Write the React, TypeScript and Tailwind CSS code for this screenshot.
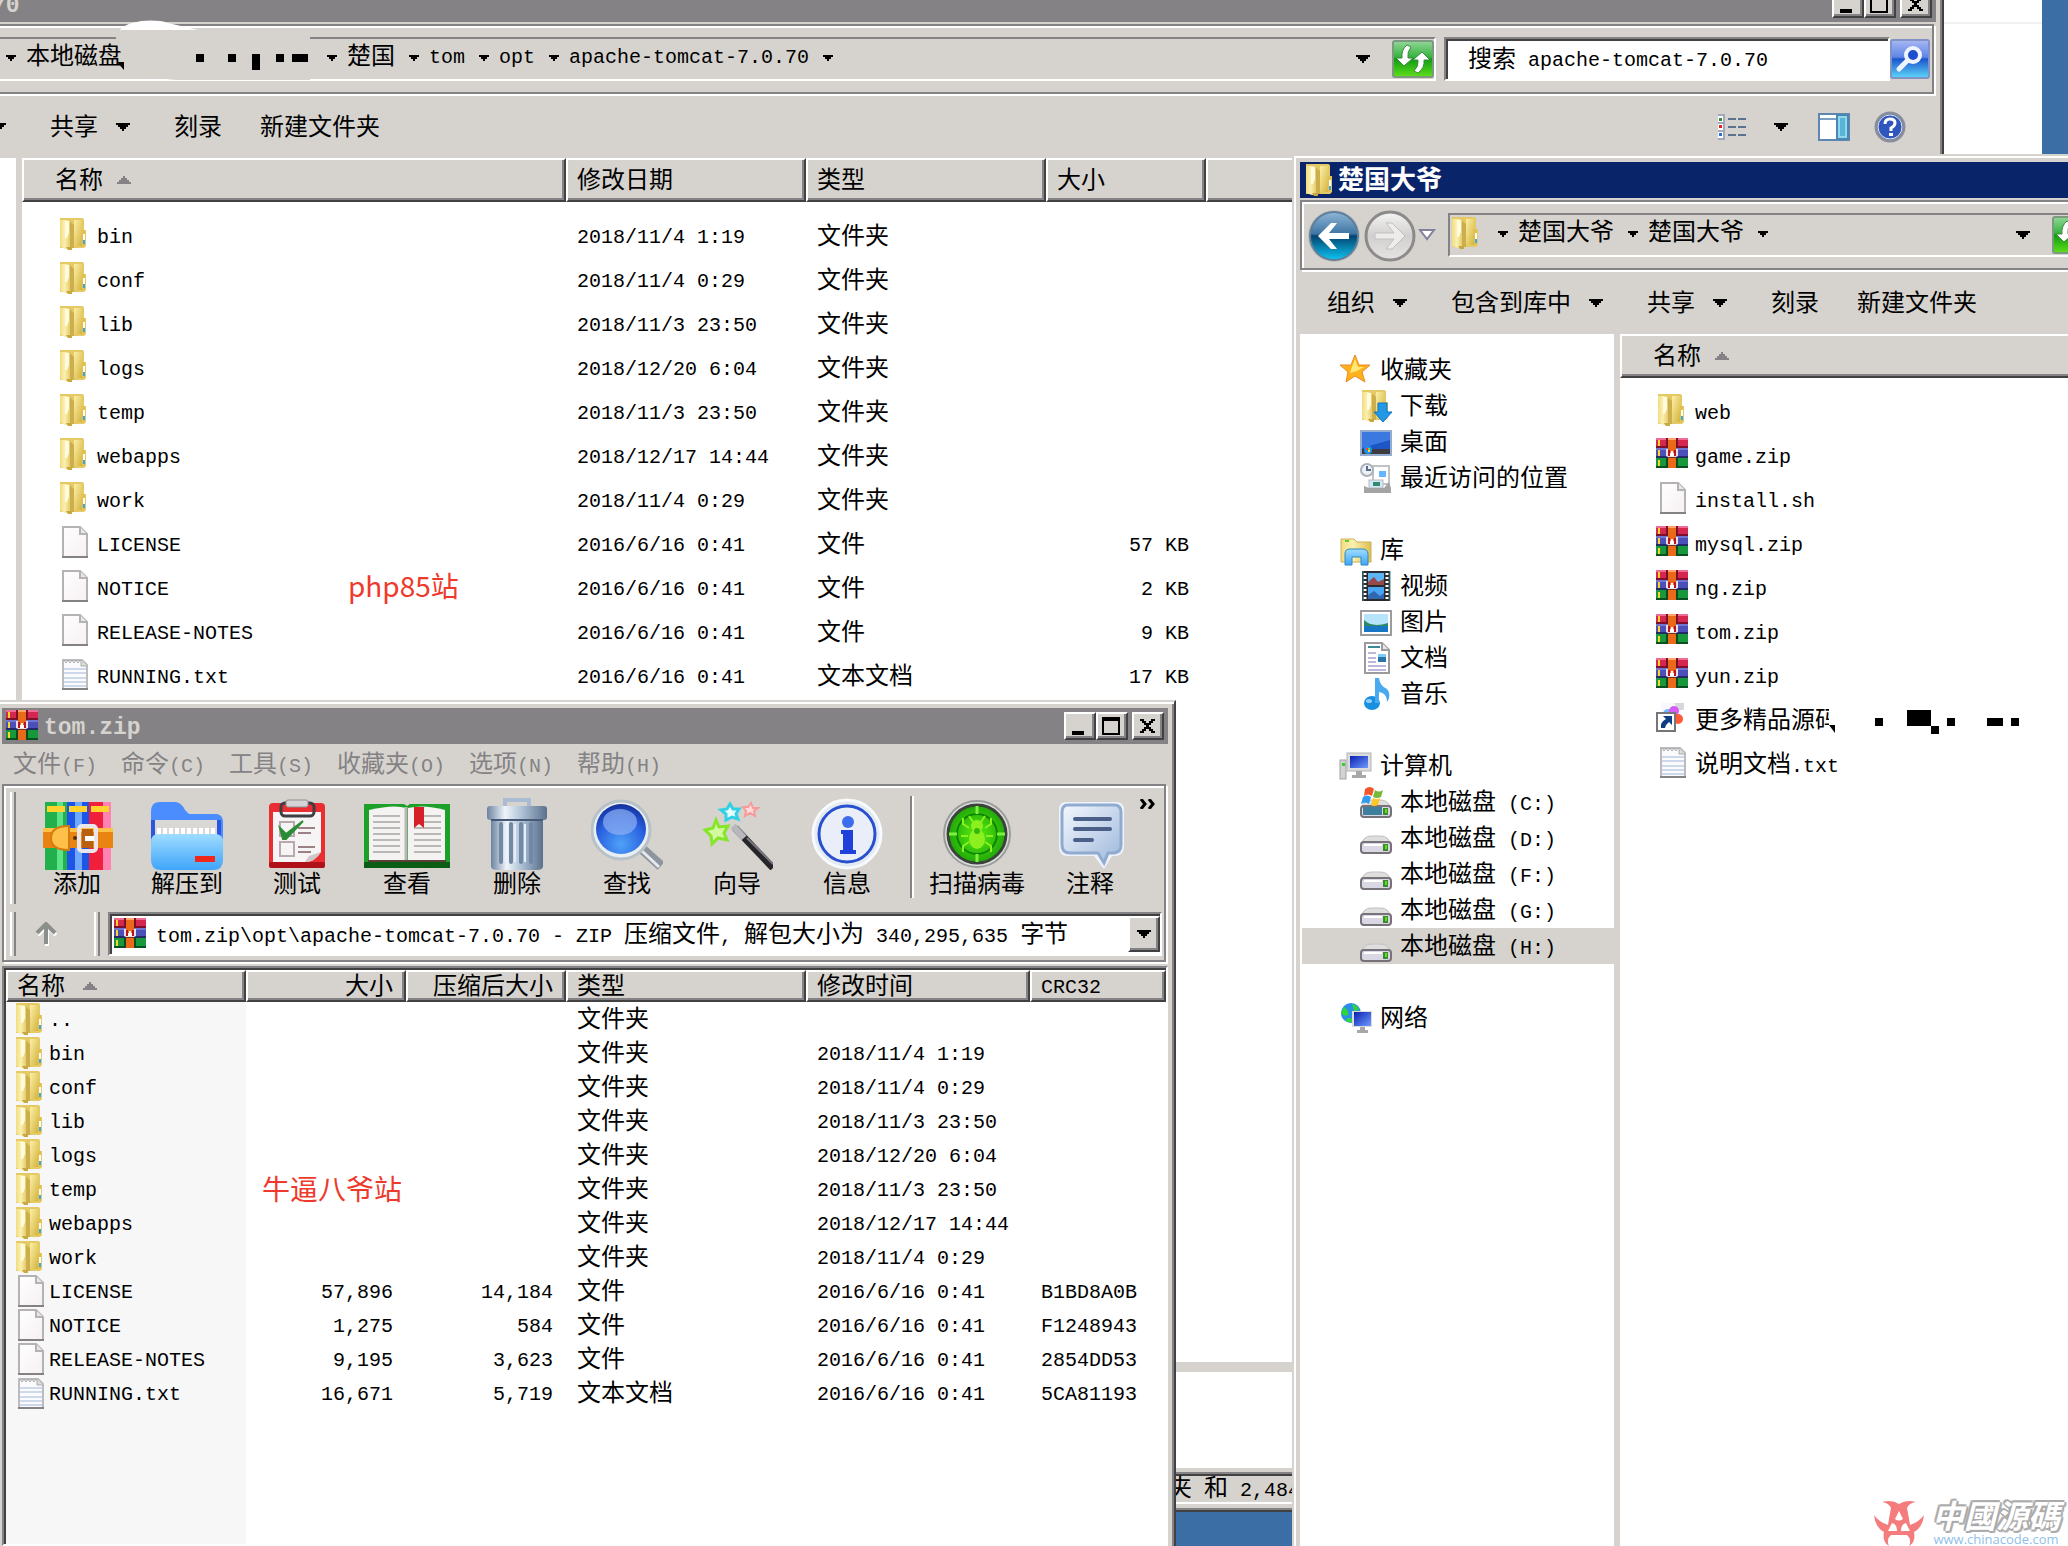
import type { ReactNode } from 'react';

type IconName =
  | 'folder'
  | 'zip'
  | 'file'
  | 'text'
  | 'shortcut'
  | 'star'
  | 'downloads'
  | 'desktop'
  | 'recent'
  | 'library'
  | 'video'
  | 'picture'
  | 'document'
  | 'music'
  | 'computer'
  | 'systemDrive'
  | 'drive'
  | 'network';

type FileRow = {
  name: string;
  icon: IconName;
  date?: string;
  type?: string;
  size?: string;
};

type ArchiveRow = {
  name: string;
  icon: IconName;
  size?: string;
  packed?: string;
  type: string;
  date?: string;
  crc?: string;
};

const tomcatFiles: FileRow[] = [
  { name: 'bin', icon: 'folder', date: '2018/11/4 1:19', type: '文件夹' },
  { name: 'conf', icon: 'folder', date: '2018/11/4 0:29', type: '文件夹' },
  { name: 'lib', icon: 'folder', date: '2018/11/3 23:50', type: '文件夹' },
  { name: 'logs', icon: 'folder', date: '2018/12/20 6:04', type: '文件夹' },
  { name: 'temp', icon: 'folder', date: '2018/11/3 23:50', type: '文件夹' },
  { name: 'webapps', icon: 'folder', date: '2018/12/17 14:44', type: '文件夹' },
  { name: 'work', icon: 'folder', date: '2018/11/4 0:29', type: '文件夹' },
  { name: 'LICENSE', icon: 'file', date: '2016/6/16 0:41', type: '文件', size: '57 KB' },
  { name: 'NOTICE', icon: 'file', date: '2016/6/16 0:41', type: '文件', size: '2 KB' },
  { name: 'RELEASE-NOTES', icon: 'file', date: '2016/6/16 0:41', type: '文件', size: '9 KB' },
  { name: 'RUNNING.txt', icon: 'text', date: '2016/6/16 0:41', type: '文本文档', size: '17 KB' }
];

const archiveFiles: ArchiveRow[] = [
  { name: '..', icon: 'folder', type: '文件夹' },
  { name: 'bin', icon: 'folder', type: '文件夹', date: '2018/11/4 1:19' },
  { name: 'conf', icon: 'folder', type: '文件夹', date: '2018/11/4 0:29' },
  { name: 'lib', icon: 'folder', type: '文件夹', date: '2018/11/3 23:50' },
  { name: 'logs', icon: 'folder', type: '文件夹', date: '2018/12/20 6:04' },
  { name: 'temp', icon: 'folder', type: '文件夹', date: '2018/11/3 23:50' },
  { name: 'webapps', icon: 'folder', type: '文件夹', date: '2018/12/17 14:44' },
  { name: 'work', icon: 'folder', type: '文件夹', date: '2018/11/4 0:29' },
  { name: 'LICENSE', icon: 'file', size: '57,896', packed: '14,184', type: '文件', date: '2016/6/16 0:41', crc: 'B1BD8A0B' },
  { name: 'NOTICE', icon: 'file', size: '1,275', packed: '584', type: '文件', date: '2016/6/16 0:41', crc: 'F1248943' },
  { name: 'RELEASE-NOTES', icon: 'file', size: '9,195', packed: '3,623', type: '文件', date: '2016/6/16 0:41', crc: '2854DD53' },
  { name: 'RUNNING.txt', icon: 'text', size: '16,671', packed: '5,719', type: '文本文档', date: '2016/6/16 0:41', crc: '5CA81193' }
];

const siteFiles: FileRow[] = [
  { name: 'web', icon: 'folder' },
  { name: 'game.zip', icon: 'zip' },
  { name: 'install.sh', icon: 'file' },
  { name: 'mysql.zip', icon: 'zip' },
  { name: 'ng.zip', icon: 'zip' },
  { name: 'tom.zip', icon: 'zip' },
  { name: 'yun.zip', icon: 'zip' },
  { name: '更多精品源码', icon: 'shortcut' },
  { name: '说明文档.txt', icon: 'text' }
];

const places: { title: string; icon: IconName; items: { label: string; icon: IconName; active?: boolean }[] }[] = [
  {
    title: '收藏夹',
    icon: 'star',
    items: [
      { label: '下载', icon: 'downloads' },
      { label: '桌面', icon: 'desktop' },
      { label: '最近访问的位置', icon: 'recent' }
    ]
  },
  {
    title: '库',
    icon: 'library',
    items: [
      { label: '视频', icon: 'video' },
      { label: '图片', icon: 'picture' },
      { label: '文档', icon: 'document' },
      { label: '音乐', icon: 'music' }
    ]
  },
  {
    title: '计算机',
    icon: 'computer',
    items: [
      { label: '本地磁盘 (C:)', icon: 'systemDrive' },
      { label: '本地磁盘 (D:)', icon: 'drive' },
      { label: '本地磁盘 (F:)', icon: 'drive' },
      { label: '本地磁盘 (G:)', icon: 'drive' },
      { label: '本地磁盘 (H:)', icon: 'drive', active: true }
    ]
  },
  { title: '网络', icon: 'network', items: [] }
];

const archiveMenu = ['文件(F)', '命令(C)', '工具(S)', '收藏夹(O)', '选项(N)', '帮助(H)'];
const archivePath = 'tom.zip\\opt\\apache-tomcat-7.0.70 - ZIP 压缩文件, 解包大小为 340,295,635 字节';

// Latin is half the width of a Chinese glyph, so the two scripts get their own sizes.
function T({ children = '' }: { children?: string }) {
  return (
    <span className="inline-block pt-1 whitespace-pre">
      {children.split(/([\u4e00-\u9fff]+)/).map((part, i) =>
        i % 2 ? (
          <span key={i} className="text-[24px]">
            {part}
          </span>
        ) : (
          part
        )
      )}
    </span>
  );
}

function Gradients() {
  return (
    <svg className="absolute h-0 w-0" aria-hidden>
      <defs>
        <linearGradient id="gold" x1="0" x2="1">
          <stop offset="0" stopColor="#f1dc80" />
          <stop offset=".4" stopColor="#fbf0b0" />
          <stop offset="1" stopColor="#dcbf52" />
        </linearGradient>
        <linearGradient id="goldDark" x1="0" x2="1" y1="0" y2="1">
          <stop offset="0" stopColor="#fbf0a8" />
          <stop offset="1" stopColor="#d6b43c" />
        </linearGradient>
        <linearGradient id="page" x1="0" x2="1" y1="0" y2="1">
          <stop offset="0" stopColor="#fff" />
          <stop offset="1" stopColor="#f6f0f2" />
        </linearGradient>
        <linearGradient id="green" x1="0" x2="0" y1="0" y2="1">
          <stop offset="0" stopColor="#93d79b" />
          <stop offset=".45" stopColor="#35b33c" />
          <stop offset=".5" stopColor="#109a12" />
          <stop offset="1" stopColor="#5fe01c" />
        </linearGradient>
        <linearGradient id="blue" x1="0" x2="0" y1="0" y2="1">
          <stop offset="0" stopColor="#a9b8f5" />
          <stop offset=".45" stopColor="#5f86e4" />
          <stop offset=".5" stopColor="#1c55cc" />
          <stop offset="1" stopColor="#5ed8fb" />
        </linearGradient>
        <linearGradient id="orb" x1="0" x2="0" y1="0" y2="1">
          <stop offset="0" stopColor="#8fb6d6" />
          <stop offset=".45" stopColor="#3f76a4" />
          <stop offset=".5" stopColor="#04446f" />
          <stop offset="1" stopColor="#0cc5f4" />
        </linearGradient>
        <linearGradient id="orbOff" x1="0" x2="0" y1="0" y2="1">
          <stop offset="0" stopColor="#f5f5f5" />
          <stop offset=".5" stopColor="#d2d0ce" />
          <stop offset="1" stopColor="#e6e4e2" />
        </linearGradient>
        <linearGradient id="sky" x1="0" x2="0" y1="0" y2="1">
          <stop offset="0" stopColor="#9fdcff" />
          <stop offset="1" stopColor="#3fa5fb" />
        </linearGradient>
        <linearGradient id="deep" x1="0" x2="1" y1="0" y2="1">
          <stop offset="0" stopColor="#0a1fb0" />
          <stop offset="1" stopColor="#6f9bff" />
        </linearGradient>
        <linearGradient id="steel" x1="0" x2="1">
          <stop offset="0" stopColor="#6c83a0" />
          <stop offset=".3" stopColor="#eef4fa" />
          <stop offset=".6" stopColor="#a9bed3" />
          <stop offset="1" stopColor="#5b708b" />
        </linearGradient>
        <linearGradient id="glass" x1="0" x2="1" y1="0" y2="1">
          <stop offset="0" stopColor="#f4f8ff" />
          <stop offset="1" stopColor="#9db7da" />
        </linearGradient>
        <radialGradient id="lens" cx=".5" cy=".8" r=".8">
          <stop offset="0" stopColor="#4fa2f8" />
          <stop offset=".6" stopColor="#2a62e0" />
          <stop offset="1" stopColor="#12309c" />
        </radialGradient>
        <radialGradient id="leaf" cx=".5" cy=".5" r=".6">
          <stop offset="0" stopColor="#58ee12" />
          <stop offset="1" stopColor="#159a06" />
        </radialGradient>
      </defs>
    </svg>
  );
}

const DRIVE = (
  <>
    <path d="M5 16Q7 14 12 14H20Q25 14 27 16L31 21H1Z" fill="#dedede" stroke="#c4c0c2" />
    <rect x="1" y="20" width="30" height="11" rx="3" fill="#dad8e4" stroke="#77727a" strokeWidth="2" />
    <rect x="4" y="22" width="18" height="2" fill="#fff" />
    <rect x="23" y="22" width="5" height="7" fill="#3c8a2c" />
    <rect x="25" y="23" width="2" height="4" fill="#5be020" />
  </>
);

const PAGE = (
  <>
    <path d="M5 1H22L29 8V31H5Z" fill="url(#page)" stroke="#b4b2b4" strokeWidth="2" />
    <path d="M22 1V8H29" fill="#e8e6e8" stroke="#b4b2b4" strokeWidth="2" />
    <path d="M4 31H30" stroke="#848284" strokeWidth="2" />
  </>
);

const FOLDER = (
  <>
    <path d="M2 0H24Q26 0 26 2V12H28V28L26 30H2Z" fill="#e4c964" />
    <path d="M16 2H24V28H16Z" fill="url(#goldDark)" />
    <path d="M24 12H27V28H24Z" fill="#e0c050" />
    <path d="M2 2H10L14 4V31H8L2 29Z" fill="url(#gold)" />
    <path d="M7 3H11V15L9 20H7Z" fill="#fffbe0" />
    <path d="M12 4L16 7V30H12Z" fill="#cdae4c" />
    <path d="M8 29H14V32H10Z" fill="#c9a93f" />
    <rect x="25" y="16" width="2" height="6" fill="#fff" />
    <rect x="25" y="22" width="2" height="4" fill="#3aa5e8" />
  </>
);

const MONITOR = (
  <>
    <rect x="7" y="3" width="24" height="18" fill="#dcdcdc" stroke="#b4b4b4" />
    <rect x="10" y="6" width="18" height="12" fill="url(#deep)" />
    <path d="M16 21H22V25H26V28H12V25H16Z" fill="#a8a8a8" />
  </>
);

const iconArt: Record<IconName, ReactNode> = {
  folder: FOLDER,
  file: PAGE,
  zip: (
    <>
      <rect width="32" height="10" fill="#d4264f" />
      <rect width="32" height="2" fill="#ee6b92" />
      <rect y="8" width="32" height="2" fill="#7c0f2b" />
      <rect y="10" width="32" height="10" fill="#4b50b8" />
      <rect y="10" width="32" height="2" fill="#7275cf" />
      <rect y="18" width="32" height="2" fill="#232a68" />
      <rect y="20" width="32" height="10" fill="#17993b" />
      <rect y="28" width="32" height="2" fill="#08501f" />
      <path d="M3 2V8M3 12V18M3 22V28" stroke="#ffd42a" strokeWidth="2" />
      <rect x="10" width="2" height="10" fill="#7a1026" />
      <rect x="20" width="2" height="10" fill="#7a1026" />
      <rect x="10" y="20" width="2" height="10" fill="#0a4a1e" />
      <rect x="20" y="20" width="2" height="10" fill="#0a4a1e" />
      <rect x="12" width="8" height="30" fill="#ea6a1a" />
      <rect x="12" width="8" height="2" fill="#ffa56a" />
      <rect x="12" y="18" width="8" height="2" fill="#7a3410" />
      <path d="M10 11H12V17L14 18H18L20 17V11H22V18L20 19H12L10 18Z" fill="#e6e2e8" />
      <path d="M13 18V12M19 18V12" stroke="#c01020" strokeWidth="2" />
      <path d="M14 18V15H15V13H17V15H18V18Z" fill="#fff" />
    </>
  ),
  text: (
    <>
      <path d="M5 2H24L29 7V31H5Z" fill="#fbfbfd" stroke="#bdbbbd" strokeWidth="2" />
      <path d="M6 2L8 5L10 2L12 5L14 2L16 5L18 2L20 5L22 2" fill="none" stroke="#a9a7a9" />
      <path d="M6 11H28M6 15H28M6 20H28M6 24H28M6 28H28" stroke="#cdd9ea" strokeWidth="2" />
      <path d="M23 2V8H29" fill="#dedcde" stroke="#aaa" />
      <path d="M4 31H30" stroke="#848284" strokeWidth="2" />
    </>
  ),
  shortcut: (
    <>
      <path d="M5 1H19L26 8V20H5Z" fill="#f7f7fc" />
      <path d="M18 1H28V8H22Z" fill="#d8d8dc" />
      <circle cx="12" cy="12" r="5" fill="#6cb8ff" />
      <circle cx="18" cy="9" r="5" fill="#d65cf5" />
      <circle cx="22" cy="17" r="5" fill="#ff5a36" />
      <rect x="1" y="11" width="18" height="18" fill="#fff" stroke="#77757a" strokeWidth="2" />
      <path d="M7 14H16V23L13 20Q10 22 9 26H5Q4 20 10 17Z" fill="#0e3f86" />
    </>
  ),
  star: (
    <>
      <path d="M15 1L19 11H30L22 18L25 28L15 22L6 28L8 18L0 11H11Z" fill="#ffb21c" stroke="#e58a25" strokeWidth="1" />
      <path d="M15 5L18 13H24L17 17L10 19L12 13Z" fill="#ffe873" />
    </>
  ),
  downloads: (
    <>
      {FOLDER}
      <path d="M18 13H27V22H32L23 32L14 22H18Z" fill="#2298e8" stroke="#1574be" />
    </>
  ),
  desktop: (
    <>
      <rect x="1" y="5" width="30" height="24" fill="#1c56c4" stroke="#94acd0" strokeWidth="2" />
      <path d="M2 6H30V14L2 22Z" fill="#3b78e0" />
      <rect x="2" y="23" width="28" height="5" fill="#3c3c40" />
      <circle cx="8" cy="24" r="4" fill="#1e90f0" />
      <path d="M6 22H8V24H6Z" fill="#f33" />
      <path d="M8 22H10V24H8Z" fill="#6d3" />
      <path d="M8 24H10V26H8Z" fill="#fd3" />
    </>
  ),
  recent: (
    <>
      <rect x="13" y="4" width="16" height="18" fill="#fff" stroke="#c2c2c2" strokeWidth="2" />
      <rect x="19" y="9" width="7" height="6" fill="#63b6ff" />
      <rect x="9" y="18" width="14" height="8" fill="#cfe9fa" stroke="#bbb" />
      <rect x="13" y="20" width="7" height="4" fill="#358a6e" />
      <path d="M4 24L9 26H24L29 20L31 26V31H4Z" fill="#a4a4a4" />
      <circle cx="7" cy="8" r="6" fill="#eef2f6" stroke="#aab2ba" strokeWidth="2" />
      <path d="M7 4V8H11" fill="none" stroke="#56708a" strokeWidth="2" />
    </>
  ),
  library: (
    <>
      <path d="M1 5H14L17 8H31V28H1Z" fill="url(#gold)" stroke="#cbb058" />
      <rect x="5" y="6" width="4" height="2" fill="#5bd02a" />
      <path d="M5 31V20Q5 15 10 15H22Q28 15 28 20V31H21V23H12V31Z" fill="url(#sky)" stroke="#2e8bb8" />
    </>
  ),
  video: (
    <>
      <rect x="2" y="1" width="28" height="30" fill="#2b2b2e" />
      <rect x="8" y="3" width="16" height="12" fill="#5cb4f5" />
      <rect x="8" y="17" width="16" height="12" fill="#49a4f2" />
      <path d="M8 12L14 7L18 12L24 9V15H8Z" fill="#96484a" />
      <path d="M8 25L14 21L20 26L24 23V29H8Z" fill="#2f68b0" />
      <path d="M5 3V30M27 3V30" stroke="#fff" strokeWidth="3" strokeDasharray="2 2" />
      <path d="M3 1V31M30 1V31" stroke="#3d8488" />
    </>
  ),
  picture: (
    <>
      <rect x="1" y="5" width="30" height="24" fill="#fff" stroke="#9d9b9d" strokeWidth="2" />
      <rect x="4" y="8" width="24" height="18" fill="#b6e4fa" />
      <path d="M4 14Q12 22 28 17V21H4Z" fill="#2d8a62" />
      <rect x="4" y="20" width="24" height="6" fill="#1877c4" />
    </>
  ),
  document: (
    <>
      <path d="M5 1H22L29 8V31H5Z" fill="#fff" stroke="#9d9b9d" strokeWidth="2" />
      <path d="M22 1V8H29" fill="#e8e6e8" stroke="#9d9b9d" strokeWidth="2" />
      <path d="M8 5H20" stroke="#3c8a98" strokeWidth="2" />
      <path d="M8 11H16M8 16H16M8 20H16M8 24H26M8 28H26" stroke="#bcb9d8" strokeWidth="2" />
      <rect x="18" y="12" width="8" height="8" fill="#2b74a8" />
      <rect x="18" y="12" width="8" height="3" fill="#7ecdf4" />
    </>
  ),
  music: (
    <>
      <ellipse cx="12" cy="25" rx="8" ry="7" fill="#1a8fe0" />
      <path d="M15 0H19Q20 8 27 11Q32 17 27 24Q27 15 19 14V25H15Z" fill="#49aaf0" />
      <ellipse cx="9" cy="23" rx="3" ry="2" fill="#8bd2fb" />
    </>
  ),
  computer: (
    <>
      <rect x="0" y="10" width="6" height="19" fill="#d2d2d2" stroke="#a2a2a2" />
      <rect x="2" y="13" width="3" height="3" fill="#35d02a" />
      {MONITOR}
    </>
  ),
  systemDrive: (
    <>
      {DRIVE}
      <rect x="3" y="21" width="19" height="8" fill="#3f7f9e" />
      <path d="M5 3Q10 -1 14 3L12 10Q8 7 4 10Z" fill="#f0562a" />
      <path d="M15 4Q19 7 23 4L21 11Q17 13 13 11Z" fill="#76b83a" />
      <path d="M3 11Q7 8 11 11L9 18Q5 15 1 18Z" fill="#2f9bea" />
      <path d="M13 12Q17 14 20 12L18 19Q14 21 11 19Z" fill="#ffc629" />
    </>
  ),
  drive: DRIVE,
  network: (
    <>
      <circle cx="11" cy="11" r="10" fill="#2b8fea" />
      <path d="M4 5Q9 8 8 13Q4 15 1 11ZM12 2Q18 3 19 8L14 9ZM6 17Q12 14 13 20Q9 21 6 19Z" fill="#2fd43c" />
      <rect x="12" y="9" width="20" height="16" fill="#dcdcdc" />
      <rect x="14" y="10" width="17" height="14" fill="url(#deep)" />
      <path d="M20 25H25V28H28V31H17V28H20Z" fill="#a8a8a8" />
    </>
  )
};

function Icon({ name, className = '' }: { name: IconName; className?: string }) {
  return (
    <svg viewBox="0 0 32 32" className={`h-8 w-8 shrink-0 overflow-visible ${className}`} aria-hidden>
      {iconArt[name]}
    </svg>
  );
}

function Caret({ className = '' }: { className?: string }) {
  return (
    <svg viewBox="0 0 14 8" className={`h-2 w-3.5 shrink-0 ${className}`} aria-hidden>
      <path d="M0 0H14V2H12V4H10V6H8V8H6V6H4V4H2V2H0Z" fill="currentColor" />
    </svg>
  );
}

function SortMark() {
  return (
    <svg viewBox="0 0 14 8" className="h-2 w-3.5 shrink-0" aria-hidden>
      <path d="M0 8H14V6H12V4H10V2H8V0H6V2H4V4H2V6H0Z" fill="#848284" />
    </svg>
  );
}

function CrumbArrow() {
  return (
    <button aria-label="展开" className="w-[34px] shrink-0 pt-1 pl-3.5">
      <svg viewBox="0 0 10 6" className="h-1.5 w-2.5" aria-hidden>
        <path d="M0 0H10V2H8V4H6V6H4V4H2V2H0Z" />
      </svg>
    </button>
  );
}

function WindowButtons() {
  const box =
    'flex h-7 w-8 items-center justify-center border-2 border-t-white border-l-white border-r-[#424142] border-b-[#424142] bg-[#d6d3ce] shadow-[inset_-2px_-2px_0_#848284]';
  return (
    <div className="flex">
      <button aria-label="最小化" className={box}>
        <svg viewBox="0 0 20 20" className="h-5 w-5">
          <rect x="2" y="15" width="12" height="4" />
        </svg>
      </button>
      <button aria-label="最大化" className={box}>
        <svg viewBox="0 0 20 20" className="h-5 w-5">
          <path d="M0 1H18V19H0ZM2 5V17H16V5Z" fillRule="evenodd" />
        </svg>
      </button>
      <button aria-label="关闭" className={`ml-1 ${box}`}>
        <svg viewBox="0 0 20 20" className="h-5 w-5">
          <path d="M2 3H6V5H8V7H11V5H13V3H17V5H15V7H13V9H11V11H13V13H15V15H17V17H13V15H11V13H8V15H6V17H2V15H4V13H6V11H8V9H6V7H4V5H2Z" />
        </svg>
      </button>
    </div>
  );
}

function RefreshButton() {
  return (
    <button aria-label="刷新" className="h-[38px] w-[42px] shrink-0">
      <svg viewBox="0 0 42 38" className="h-full w-full">
        <rect x="1" y="1" width="40" height="36" rx="2" fill="url(#green)" stroke="#7d9a80" strokeWidth="2" />
        <path d="M15 5L19 7Q15 12 16 18H21L12 26L4 18H10Q9 10 15 5Z" fill="#fff" stroke="#3c8a40" />
        <path d="M26 33L22 31Q27 26 26 20H21L30 12L38 20H32Q33 28 26 33Z" fill="#fff" stroke="#3c8a40" />
      </svg>
    </button>
  );
}

function Bevel({ className, children }: { className: string; children: ReactNode }) {
  return (
    <section
      className={`absolute flex flex-col border-2 border-t-[#d6d3ce] border-l-[#d6d3ce] border-r-[#424142] border-b-[#424142] bg-[#d6d3ce] p-1.5 shadow-[inset_2px_2px_0_#fff,inset_-2px_-2px_0_#848284] ${className}`}
    >
      {children}
    </section>
  );
}

const groove = 'mr-0.5 border-2 border-[#848284] shadow-[inset_2px_2px_0_#fff,2px_2px_0_#fff]';
const headCell =
  'flex items-center border-2 border-t-white border-l-white border-r-[#424142] border-b-[#424142] bg-[#d6d3ce] shadow-[inset_-2px_-2px_0_#848284]';
const crumbBox =
  'flex h-11 min-w-0 flex-1 items-center border-2 border-t-[#848284] border-l-[#848284] border-r-white border-b-white';

function ToolButton({ label, menu }: { label: string; menu?: boolean }) {
  return (
    <button className={`flex shrink-0 items-center gap-[18px] ${menu ? 'pr-1.5' : ''}`}>
      <T>{label}</T>
      {menu ? <Caret /> : null}
    </button>
  );
}

function TomcatWindow() {
  return (
    <Bevel className="-top-[22px] right-[124px] bottom-[34px] -left-6">
      <header className="flex h-9 shrink-0 items-center justify-between bg-[#848284] pr-1 pl-2">
        <h2 className="pt-1 text-[23px] font-bold text-[#d6d3ce]">70</h2>
        <WindowButtons />
      </header>

      <div className={`mt-0.5 mb-0.5 flex h-[70px] shrink-0 items-center pr-0.5 pl-1 ${groove}`}>
        <div className={crumbBox}>
          <div className="flex h-full items-center pb-1.5">
            <CrumbArrow />
            <T>本地磁盘</T>
            <span className="relative h-9 w-[191px]">
              <svg viewBox="0 0 208 66" className="absolute -top-5 -left-2 h-[66px] w-52" aria-hidden>
                <path d="M6 12C12 3 40 0 54 5L84 12V16H6Z" fill="#fff" />
                <path d="M2 20Q1 12 8 12H196V62H68Q44 62 34 54L10 50V44Z" fill="#d6d3ce" />
                <path d="M3 44H10V52Z" />
                <path d="M82 36H90V44H82ZM114 36H122V44H114ZM138 36H146V52H138ZM162 36H170V44H162ZM178 36H194V44H178Z" />
              </svg>
            </span>
            <CrumbArrow />
            <T>楚国</T>
            <CrumbArrow />
            <T>tom</T>
            <CrumbArrow />
            <T>opt</T>
            <CrumbArrow />
            <T>apache-tomcat-7.0.70</T>
            <CrumbArrow />
          </div>
          <button aria-label="历史记录" className="mr-[22px] ml-auto">
            <Caret />
          </button>
          <RefreshButton />
        </div>
        <div className="ml-2 flex h-11 w-[446px] shrink-0 items-center border-2 border-t-[#848284] border-l-[#848284] border-r-white border-b-white bg-white pt-1 pl-[22px] shadow-[inset_2px_2px_0_#424142]">
          <label htmlFor="search" className="text-[24px]">
            搜索
          </label>
          <input
            id="search"
            placeholder="apache-tomcat-7.0.70"
            className="ml-3 min-w-0 flex-1 bg-transparent leading-7 outline-none placeholder:text-black"
          />
        </div>
        <button aria-label="搜索" className="h-10 w-10 shrink-0">
          <svg viewBox="0 0 40 40" className="h-full w-full">
            <rect x="1" y="1" width="38" height="38" rx="2" fill="url(#blue)" stroke="#7f93c4" strokeWidth="2" />
            <circle cx="23" cy="16" r="7" fill="#1c4ed0" stroke="#f0f4ff" strokeWidth="4" />
            <path d="M17 22L9 30" stroke="#f0f4ff" strokeWidth="5" strokeLinecap="round" />
          </svg>
        </button>
      </div>

      <div className="flex h-[62px] shrink-0 items-center justify-between pr-[30px] pl-2">
        <div className="flex items-center gap-[38px]">
          <button aria-label="包含到库中" className="pr-1.5">
            <Caret />
          </button>
          <ToolButton label="共享" menu />
          <ToolButton label="刻录" />
          <ToolButton label="新建文件夹" />
        </div>
        <div className="flex items-center gap-6">
          <button aria-label="更改视图">
            <svg viewBox="2 0 32 28" className="h-7 w-8">
              <path d="M1 2H8V26H1Z" fill="#fff" stroke="#a3a9bd" strokeWidth="2" />
              <path d="M1 10H8M1 18H8" stroke="#a3a9bd" strokeWidth="2" />
              <rect x="3" y="5" width="3" height="3" fill="#3c8a3c" />
              <rect x="3" y="12" width="3" height="3" fill="#e02020" />
              <rect x="3" y="20" width="3" height="3" fill="#2a6fd6" />
              <path d="M12 6H20M22 6H30M12 14H20M22 14H30M12 22H20M22 22H30" stroke="#5b7290" strokeWidth="2" />
            </svg>
          </button>
          <button aria-label="更多选项" className="mr-1.5">
            <Caret />
          </button>
          <button aria-label="预览窗格">
            <svg viewBox="0 0 32 28" className="h-7 w-8">
              <rect x="1" y="1" width="30" height="26" fill="#fff" stroke="#5d86b0" strokeWidth="2" />
              <path d="M2 6H18" stroke="#7ba0c6" strokeWidth="2" />
              <rect x="19" y="2" width="11" height="24" fill="#8fd8ea" stroke="#4a86b4" strokeWidth="2" />
              <rect x="22" y="5" width="5" height="18" fill="#57b4d6" />
            </svg>
          </button>
          <button aria-label="帮助">
            <svg viewBox="0 0 32 32" className="h-8 w-8">
              <circle cx="16" cy="16" r="14" fill="#2f56bc" stroke="#8a8e9c" strokeWidth="3" />
              <circle cx="16" cy="16" r="12" fill="none" stroke="#dfe6f6" />
              <path d="M11 13Q11 8 16 8Q21 8 21 12Q21 15 17 17V20" fill="none" stroke="#fff" strokeWidth="3" />
              <rect x="15" y="22" width="4" height="3" fill="#fff" />
            </svg>
          </button>
        </div>
      </div>

      <div className="flex min-h-0 flex-1">
        <div className="w-8 shrink-0 bg-white" />
        <div className="ml-1.5 min-w-0 flex-1 bg-white">
          <table className="w-full table-fixed border-separate border-spacing-0 text-left">
            <colgroup>
              <col className="w-[544px]" />
              <col className="w-60" />
              <col className="w-60" />
              <col className="w-40" />
              <col />
            </colgroup>
            <thead>
              <tr>
                <th className="p-0 pb-3 font-normal">
                  <div className={`h-11 gap-3.5 pl-[31px] ${headCell}`}>
                    <T>名称</T>
                    <SortMark />
                  </div>
                </th>
                {['修改日期', '类型', '大小'].map((label) => (
                  <th key={label} className="p-0 pb-3 font-normal">
                    <div className={`h-11 pl-[9px] ${headCell}`}>
                      <T>{label}</T>
                    </div>
                  </th>
                ))}
                <th className="p-0 pb-3">
                  <div className={`h-11 ${headCell}`} />
                </th>
              </tr>
            </thead>
            <tbody>
              {tomcatFiles.map((file) => (
                <tr key={file.name} className="h-11">
                  <td className="p-0">
                    <span className="flex items-center gap-[7px] pl-9">
                      <Icon name={file.icon} className="mb-1" />
                      <T>{file.name}</T>
                    </span>
                  </td>
                  <td className="p-0 pl-[11px]">
                    <T>{file.date}</T>
                  </td>
                  <td className="p-0 pl-[11px]">
                    <T>{file.type}</T>
                  </td>
                  <td className="p-0 pr-[17px] text-right">
                    <T>{file.size}</T>
                  </td>
                  <td />
                </tr>
              ))}
            </tbody>
          </table>
        </div>
      </div>

      <div className="mt-2.5 mb-1 h-24 shrink-0 bg-white" />
      <footer className="flex h-8 shrink-0 items-center border-t-2 border-b-2 border-t-[#848284] border-b-white pl-[1184px] shadow-[inset_0_2px_0_#424142]">
        <T>夹 和 2,484</T>
      </footer>
      <p className="absolute top-[593px] left-[370px] font-['Noto_Sans_CJK_SC',sans-serif] text-[28px] text-[#ee3a2c]">php85站</p>
    </Bevel>
  );
}

const toolArt: { label: string; art: ReactNode; wide?: boolean }[] = [
  {
    label: '添加',
    art: (
      <>
        <rect x="4" y="4" width="22" height="68" fill="#22b04c" />
        <rect x="16" y="4" width="6" height="68" fill="#5fe389" />
        <rect x="26" y="4" width="22" height="68" fill="#1f55e6" />
        <rect x="34" y="4" width="7" height="68" fill="#6fa9ff" />
        <rect x="48" y="4" width="22" height="68" fill="#f01f3c" />
        <rect x="62" y="4" width="8" height="68" fill="#ff83b0" />
        <path d="M6 8H24V14H6ZM28 8H46V14H28ZM50 8H68V14H50Z" fill="#ffd22e" />
        <rect x="2" y="30" width="70" height="20" fill="#e98412" />
        <rect x="2" y="30" width="70" height="4" fill="#ffc04a" />
        <path d="M28 28Q10 28 10 40Q10 52 28 52Z" fill="#ffc04a" stroke="#d47c10" strokeWidth="2" />
        <rect x="38" y="28" width="17" height="25" rx="3" fill="none" stroke="#e8e6ea" strokeWidth="4" />
        <rect x="41" y="31" width="11" height="19" fill="#b8600e" />
        <rect x="44" y="38" width="9" height="5" fill="#fff" />
        <circle cx="34" cy="40" r="2" fill="#5a2c06" />
      </>
    )
  },
  {
    label: '解压到',
    art: (
      <>
        <path d="M0 14Q0 4 8 4H24Q30 4 34 12L38 16H66Q72 17 72 24V62H0Z" fill="#4b8dff" />
        <path d="M4 22H66V40H4Z" fill="#dad8d4" />
        <path d="M68 22V44M2 22V44" stroke="#2a56e0" strokeWidth="4" />
        <path d="M6 34H64" stroke="#fff" strokeWidth="8" strokeDasharray="4 2" />
        <path d="M0 44Q0 36 8 36H64Q72 36 72 44V62Q72 72 62 72H10Q0 72 0 62Z" fill="url(#sky)" />
        <rect x="44" y="58" width="20" height="6" fill="#f0281c" />
      </>
    )
  },
  {
    label: '测试',
    art: (
      <>
        <rect x="8" y="5" width="56" height="65" rx="4" fill="#ea2d30" />
        <rect x="8" y="64" width="56" height="6" rx="2" fill="#b01018" />
        <path d="M12 14H60V54Q54 64 44 64H12Z" fill="#f6f4f4" />
        <path d="M60 54Q54 64 44 64L48 58Z" fill="#cfc8c8" />
        <rect x="20" y="5" width="33" height="13" rx="4" fill="none" stroke="#3d3f44" strokeWidth="3" />
        <rect x="25" y="2" width="22" height="7" rx="2" fill="#d4d4d6" stroke="#8f8f93" />
        <rect x="19" y="24" width="14" height="14" fill="none" stroke="#b9a8ac" strokeWidth="2" />
        <rect x="19" y="44" width="14" height="14" fill="none" stroke="#b9a8ac" strokeWidth="2" />
        <path d="M37 30H54M37 35H50M37 49H54M37 54H50" stroke="#9b8084" strokeWidth="2" />
        <path d="M19 30L25 36L42 23L25 41H22Z" fill="#2a8c35" stroke="#2a8c35" strokeWidth="2" />
      </>
    )
  },
  {
    label: '查看',
    wide: true,
    art: (
      <>
        <path d="M0 6H40L43 8L46 6H86V70H0Z" fill="#1da02a" />
        <path d="M0 64H86V70H0Z" fill="#0b5c14" />
        <path d="M5 12Q30 6 42 10V64H5Z" fill="#f4f3f1" />
        <path d="M44 10Q60 6 81 12V64H44Z" fill="#f4f3f1" />
        <path d="M42 9V64" stroke="#b9b7b5" strokeWidth="3" />
        <path d="M9 18H36M9 24H36M9 30H36M9 36H36M9 42H36M9 48H36M9 54H36" stroke="#b9b8b6" strokeWidth="2" />
        <path d="M50 18H77M50 24H77M50 30H77M50 36H77M50 42H77M50 48H77M50 54H77" stroke="#b9b8b6" strokeWidth="2" />
        <path d="M50 9H60V30L55 26L50 30Z" fill="#d61f26" />
        <path d="M4 63H82" stroke="#5a4038" strokeWidth="2" />
      </>
    )
  },
  {
    label: '删除',
    art: (
      <>
        <path d="M24 8V2H48V8" fill="none" stroke="#a9bcd2" strokeWidth="4" />
        <path d="M10 22H62V68Q62 72 56 72H16Q10 72 10 68Z" fill="url(#steel)" />
        <path d="M20 26V64M30 26V64M40 26V64M50 26V64" stroke="#7289a6" strokeWidth="4" strokeLinecap="round" />
        <path d="M24 26V64M34 26V64M44 26V64" stroke="#e4eef8" strokeWidth="2" />
        <rect x="6" y="8" width="60" height="14" rx="3" fill="url(#steel)" />
        <path d="M10 22H62" stroke="#465a78" strokeWidth="2" />
      </>
    )
  },
  {
    label: '查找',
    art: (
      <>
        <path d="M50 50L70 68" stroke="#8f959e" strokeWidth="10" />
        <path d="M50 52L68 69" stroke="#e6eaee" strokeWidth="3" />
        <circle cx="30" cy="32" r="29" fill="#e9eef2" stroke="#b7c1c8" strokeWidth="3" />
        <circle cx="30" cy="31" r="25" fill="url(#lens)" />
        <ellipse cx="29" cy="24" rx="17" ry="13" fill="#8fb0f4" opacity=".7" />
      </>
    )
  },
  {
    label: '向导',
    art: (
      <>
        <path d="M34 30L72 70" stroke="#26262a" strokeWidth="7" />
        <path d="M32 28L43 40" stroke="#b8b8bc" strokeWidth="7" />
        <path d="M46 40L72 66" stroke="#77777c" strokeWidth="2" />
        <path d="M15 22L18 29L27 28L23 35L26 42L17 40L11 46L10 38L4 32L12 30Z" fill="#d2f9a0" stroke="#86e62a" strokeWidth="3" />
        <path d="M29 6L32 11L38 11L35 16L37 21L31 19L25 22L25 16L20 12L26 11Z" fill="#e8ffff" stroke="#33cfe6" strokeWidth="3" />
        <path d="M50 5L52 10L57 10L53 13L54 18L49 15L44 18L45 13L42 9L47 9Z" fill="#ffd9d6" stroke="#f79a9a" strokeWidth="2" />
      </>
    )
  },
  {
    label: '信息',
    art: (
      <>
        <circle cx="36" cy="36" r="34" fill="#e3eaf2" stroke="#f7fafc" strokeWidth="3" />
        <circle cx="36" cy="36" r="28" fill="#e9eef8" stroke="#2850cf" strokeWidth="3" />
        <circle cx="37" cy="24" r="6" fill="#3d6cec" />
        <path d="M30 32H42V52H45V56H29V52H32V36H30Z" fill="#2040dc" />
      </>
    )
  },
  {
    label: '扫描病毒',
    art: (
      <>
        <circle cx="36" cy="36" r="33" fill="#dcdcdc" stroke="#9a9c9a" strokeWidth="2" />
        <circle cx="36" cy="36" r="29" fill="url(#leaf)" stroke="#3a443a" strokeWidth="3" />
        <circle cx="36" cy="36" r="20" fill="none" stroke="#0c8404" strokeWidth="2" />
        <path d="M36 8V16M36 56V64M8 36H16M56 36H64" stroke="#7cf23c" strokeWidth="3" />
        <path d="M28 30L22 26V20M44 30L50 26V20M27 38H20M45 38H52M28 44L22 48V54M44 44L50 48V54M32 24L28 18M40 24L44 18" fill="none" stroke="#8cf020" strokeWidth="2" />
        <ellipse cx="36" cy="41" rx="8" ry="10" fill="#8cf020" />
        <circle cx="36" cy="28" r="6" fill="#8cf020" />
        <circle cx="36" cy="33" r="3" fill="#35b80c" />
      </>
    )
  },
  {
    label: '注释',
    art: (
      <>
        <path d="M12 4H62Q70 4 70 12V48Q70 57 62 58H58L50 71L40 58H14Q5 58 5 49V12Q5 4 12 4Z" fill="#eef3fa" />
        <path d="M14 7H60Q67 7 67 14V47Q67 54 60 55H54L50 65L44 55H16Q8 55 8 47V14Q8 7 14 7Z" fill="url(#glass)" stroke="#8fabd0" strokeWidth="3" />
        <path d="M21 21H56M21 31H56M21 42H38" stroke="#4a6088" strokeWidth="4" strokeLinecap="round" />
      </>
    )
  }
];

function ArchiveTool({ index, className = 'w-[110px]' }: { index: number; className?: string }) {
  const { label, art, wide } = toolArt[index];
  return (
    <button className={`flex shrink-0 flex-col items-center pt-1.5 ${className}`}>
      <svg viewBox={wide ? '0 0 86 72' : '0 0 72 72'} className={wide ? 'h-[72px] w-[86px]' : 'h-[72px] w-[72px]'} aria-hidden>
        {art}
      </svg>
      <T>{label}</T>
    </button>
  );
}

function Grip() {
  return <span className="h-full w-1.5 shrink-0 border-x-2 border-l-white border-r-[#848284]" />;
}

function ArchiveWindow() {
  return (
    <Bevel className="top-[700px] -bottom-2 -left-1.5 w-[1182px]">
      <header className="flex h-9 shrink-0 items-center bg-[#848284] pr-1 pl-1">
        <Icon name="zip" />
        <h2 className="ml-1.5 flex-1 pt-1 text-[23px] font-bold text-[#d6d3ce]">tom.zip</h2>
        <WindowButtons />
      </header>

      <nav className="flex h-10 shrink-0 items-center gap-6 pl-[11px] text-[#848284]">
        {archiveMenu.map((label) => (
          <button key={label}>
            <T>{label}</T>
          </button>
        ))}
      </nav>

      <div className={`mb-1 flex h-[178px] shrink-0 flex-col gap-2 pt-1.5 pl-1.5 ${groove}`}>
        <div className="flex h-28">
          <Grip />
          <div className="ml-1.5 flex">
            {[0, 1, 2, 3, 4, 5, 6, 7].map((index) => (
              <ArchiveTool key={index} index={index} />
            ))}
          </div>
          <span className="mx-2 mt-1 h-[102px] w-1 shrink-0 border-x-2 border-l-[#848284] border-r-white" />
          <ArchiveTool index={8} />
          <ArchiveTool index={9} className="ml-2 w-[100px]" />
          <button aria-label="更多工具" className="h-6 w-4">
            <svg viewBox="0 0 16 10" className="h-2.5 w-4">
              <path d="M1 0L5 5L1 10M9 0L13 5L9 10" fill="none" stroke="#000" strokeWidth="3" />
            </svg>
          </button>
        </div>

        <div className="flex h-11 items-center pr-0.5">
          <Grip />
          <button aria-label="向上" className="mr-[18px] flex w-[60px] justify-center">
            <svg viewBox="0 0 22 24" className="h-6 w-[22px]">
              <path d="M12 24V5M3 13L12 4L21 13" fill="none" stroke="#fff" strokeWidth="4" />
              <path d="M11 22V3M2 11L11 2L20 11" fill="none" stroke="#8c908c" strokeWidth="4" />
            </svg>
          </button>
          <Grip />
          <div className="relative ml-2 flex h-11 min-w-0 flex-1 items-center border-2 border-t-[#848284] border-l-[#848284] border-r-white border-b-white bg-white pl-1 shadow-[inset_2px_2px_0_#424142]">
            <Icon name="zip" />
            <span className="ml-2.5 flex-1" aria-hidden>
              <T>{archivePath}</T>
            </span>
            <span className="flex h-9 w-8 items-center justify-center border-2 border-t-white border-l-white border-r-[#424142] border-b-[#424142] bg-[#d6d3ce] shadow-[inset_-2px_-2px_0_#848284]">
              <Caret />
            </span>
            <select aria-label="路径" className="absolute inset-0 w-full opacity-0">
              <option>{archivePath}</option>
            </select>
          </div>
        </div>
      </div>

      <div className="min-h-0 flex-1 border-2 border-t-[#848284] border-l-[#848284] border-r-white border-b-white">
        <div className="h-full border-t-2 border-l-2 border-[#424142] bg-[linear-gradient(to_right,#f7f7f7_240px,#fff_240px)]">
          <table className="w-full table-fixed border-separate border-spacing-0 text-left">
            <colgroup>
              <col className="w-60" />
              <col className="w-40" />
              <col className="w-40" />
              <col className="w-60" />
              <col className="w-56" />
              <col />
            </colgroup>
            <thead>
              <tr>
                <th className="p-0 font-normal">
                  <div className={`h-8 gap-[18px] pl-[9px] ${headCell}`}>
                    <T>名称</T>
                    <SortMark />
                  </div>
                </th>
                {['大小', '压缩后大小'].map((label) => (
                  <th key={label} className="p-0 font-normal">
                    <div className={`h-8 justify-end pr-[11px] ${headCell}`}>
                      <T>{label}</T>
                    </div>
                  </th>
                ))}
                {['类型', '修改时间', 'CRC32'].map((label) => (
                  <th key={label} className="p-0 font-normal">
                    <div className={`h-8 pl-[9px] ${headCell}`}>
                      <T>{label}</T>
                    </div>
                  </th>
                ))}
              </tr>
            </thead>
            <tbody>
              {archiveFiles.map((file) => (
                <tr key={file.name} className="h-[34px]">
                  <td className="p-0">
                    <span className="flex items-center gap-[3px] pl-2">
                      <Icon name={file.icon} />
                      <T>{file.name}</T>
                    </span>
                  </td>
                  <td className="p-0 pr-[13px] text-right">
                    <T>{file.size}</T>
                  </td>
                  <td className="p-0 pr-[13px] text-right">
                    <T>{file.packed}</T>
                  </td>
                  <td className="p-0 pl-[11px]">
                    <T>{file.type}</T>
                  </td>
                  <td className="p-0 pl-[11px]">
                    <T>{file.date}</T>
                  </td>
                  <td className="p-0 pl-[11px]">
                    <T>{file.crc}</T>
                  </td>
                </tr>
              ))}
            </tbody>
          </table>
        </div>
      </div>
      <p className="absolute top-[474px] left-[266px] font-['Noto_Sans_CJK_SC',sans-serif] text-[28px] text-[#ee3a2c]">牛逼八爷站</p>
    </Bevel>
  );
}

function SiteWindow() {
  return (
    <Bevel className="top-[154px] -right-10 -bottom-2 left-[1292px]">
      <header className="flex h-9 shrink-0 items-center gap-0.5 bg-[#0a246a] pl-1">
        <Icon name="folder" />
        <h2 className="pt-1 text-[26px] font-bold text-white">楚国大爷</h2>
      </header>

      <div className={`mt-0.5 mb-0.5 flex h-[70px] shrink-0 items-center pl-1 ${groove}`}>
        <button aria-label="后退" className="pt-0.5">
          <svg viewBox="0 0 56 56" className="h-14 w-14">
            <circle cx="28" cy="28" r="26" fill="#c4c2c0" />
            <circle cx="28" cy="28" r="24" fill="url(#orb)" stroke="#5f7f9a" strokeWidth="2" />
            <path d="M12 28L25 15H31L23 25H43V31H23L31 41H25Z" fill="#fff" />
          </svg>
        </button>
        <button aria-label="前进" className="pt-0.5">
          <svg viewBox="0 0 56 56" className="h-14 w-14">
            <circle cx="28" cy="28" r="24" fill="url(#orbOff)" stroke="#8c8a8a" strokeWidth="3" />
            <path d="M43 28L30 15H24L32 25H13V31H32L24 41H30Z" fill="#eeecea" stroke="#c2c0be" />
          </svg>
        </button>
        <button aria-label="最近浏览" className="mr-3">
          <svg viewBox="0 0 18 12" className="h-3 w-[18px]">
            <path d="M2 1H16L9 10Z" fill="#fff" stroke="#84829a" strokeWidth="2" />
          </svg>
        </button>
        <div className={crumbBox}>
          <Icon name="folder" className="mr-0.5 mb-1" />
          <div className="flex h-full items-center pb-1.5">
            <CrumbArrow />
            <T>楚国大爷</T>
            <CrumbArrow />
            <T>楚国大爷</T>
            <CrumbArrow />
          </div>
          <button aria-label="历史记录" className="mr-[22px] ml-auto">
            <Caret />
          </button>
          <RefreshButton />
        </div>
      </div>

      <div className="flex h-[62px] shrink-0 items-center gap-[38px] pl-[27px]">
        <ToolButton label="组织" menu />
        <ToolButton label="包含到库中" menu />
        <ToolButton label="共享" menu />
        <ToolButton label="刻录" />
        <ToolButton label="新建文件夹" />
      </div>

      <div className="flex min-h-0 flex-1">
        <nav className="flex w-[314px] shrink-0 flex-col gap-9 bg-white pt-[18px]">
          {places.map((group) => (
            <ul key={group.title}>
              <li>
                <button className="flex h-9 w-full items-center gap-2 pl-10">
                  <Icon name={group.icon} />
                  <T>{group.title}</T>
                </button>
              </li>
              {group.items.map((item) => (
                <li key={item.label} className={item.active ? 'ml-0.5 bg-[#d6d3ce]' : 'ml-0.5'}>
                  <button className="flex h-9 w-full items-center gap-2 pl-[58px]">
                    <Icon name={item.icon} />
                    <T>{item.label}</T>
                  </button>
                </li>
              ))}
            </ul>
          ))}
        </nav>
        <div className="ml-1.5 min-w-0 flex-1 bg-white">
          <table className="w-full table-fixed border-separate border-spacing-0 text-left">
            <thead>
              <tr>
                <th className="p-0 pb-3 font-normal">
                  <div className={`h-11 gap-3.5 pl-[31px] ${headCell}`}>
                    <T>名称</T>
                    <SortMark />
                  </div>
                </th>
              </tr>
            </thead>
            <tbody>
              {siteFiles.map((file) => (
                <tr key={file.name} className="h-11">
                  <td className="p-0">
                    <span className="flex items-center pl-9">
                      <Icon name={file.icon} className="mr-[7px] mb-1" />
                      <T>{file.name}</T>
                      {file.icon === 'shortcut' ? (
                        <svg viewBox="0 0 200 28" className="-ml-2.5 h-7 w-[200px] shrink-0" aria-hidden>
                          <rect width="14" height="28" fill="#fff" />
                          <path d="M0 19H6V27Z" />
                          <path d="M46 12H54V20H46ZM78 4H102V20H110V28H102V20H78ZM118 12H126V20H118ZM158 12H174V20H158ZM182 12H190V20H182Z" />
                        </svg>
                      ) : null}
                    </span>
                  </td>
                </tr>
              ))}
            </tbody>
          </table>
        </div>
      </div>
    </Bevel>
  );
}

function Watermark() {
  return (
    <div className="absolute right-2 bottom-0 flex items-end gap-2">
      <svg viewBox="0 0 50 46" className="h-[46px] w-[50px]" aria-hidden>
        <path d="M8 2Q18 -1 25 4Q32 -1 42 2Q35 3 33 8Q35 18 36 25Q45 22 50 15Q49 27 40 32Q42 42 35 46Q38 39 33 35H17Q12 39 15 46Q8 42 10 32Q1 27 0 15Q5 22 14 25Q15 18 17 8Q15 3 8 2Z" fill="#f47c7c" />
        <path d="M25 11L29 19Q25 22 21 19ZM18 23Q23 24 23 31H14ZM32 23Q27 24 27 31H36Z" fill="#fff" />
      </svg>
      <div className="flex flex-col items-center">
        <span className="font-['Noto_Sans_CJK_TC',sans-serif] text-[32px] leading-9 font-bold text-white italic [text-shadow:2px_0_#aaa,-2px_0_#aaa,0_2px_#aaa,0_-2px_#aaa,2px_2px_#bbb,-2px_-2px_#bbb]">
          中國源碼
        </span>
        <a href="#" className="font-['Open_Sans',sans-serif] text-[13px] leading-[14px] text-[#8fc1e8]">
          www.chinacode.com
        </a>
      </div>
    </div>
  );
}

export default function App() {
  return (
    <main className="relative h-screen overflow-hidden bg-[#3a6ea5] font-['Liberation_Mono','Noto_Sans_CJK_SC',monospace] text-[20px] leading-6 text-black">
      <Gradients />
      <div className="absolute top-0 right-[26px] h-[300px] w-60 bg-white pt-[22px]">
        <div className="h-0.5 bg-[#f1f1f1]" />
      </div>
      <TomcatWindow />
      <ArchiveWindow />
      <SiteWindow />
      <Watermark />
    </main>
  );
}
